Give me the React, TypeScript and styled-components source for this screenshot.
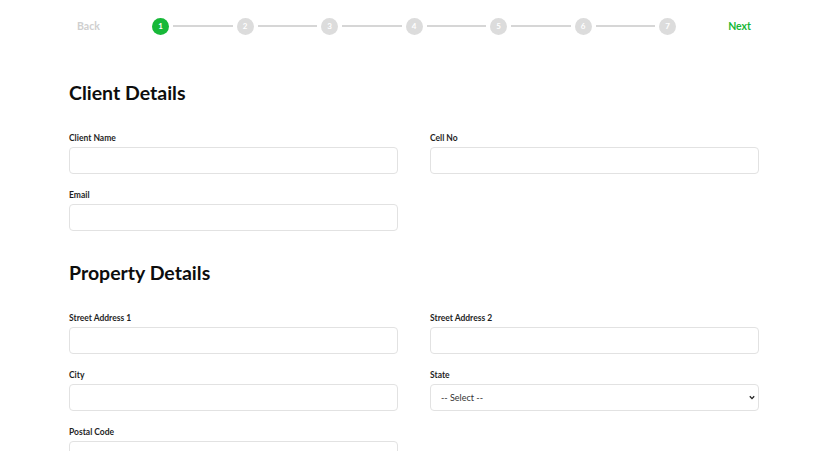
import { createGlobalStyle, styled } from "styled-components"

const GlobalStyle = createGlobalStyle`
    * {
        box-sizing: border-box;
    }

    body {
        margin: 0;
        background: #ffffff;
        font-family: 'Lato', 'Liberation Sans', sans-serif;
        color: #111111;
    }
`

const Page = styled.div`
    width: 690px;
    margin: 0 auto;
`

const TopBar = styled.div`
    height: 52px;
    display: flex;
    align-items: center;
    justify-content: space-between;
`

const NavButton = styled.button<{ $active?: boolean }>`
    border: 0 none;
    background: transparent;
    padding: 0 8px;
    font-family: inherit;
    font-size: 10.5px;
    font-weight: 700;
    color: ${p => p.$active ? "#17b838" : "#cfcfcf"};
    cursor: pointer;
`

const Steps = styled.div`
    width: 524px;
    display: flex;
    align-items: center;
`

const StepDot = styled.div<{ $active?: boolean }>`
    width: 17px;
    height: 17px;
    flex: none;
    border-radius: 50%;
    display: flex;
    align-items: center;
    justify-content: center;
    font-size: 8px;
    font-weight: 700;
    color: #ffffff;
    background-color: ${p => p.$active ? "#17b838" : "#dcdcdc"};
`

const Connector = styled.div`
    flex: 1;
    height: 2px;
    margin: 0 4px;
    background-color: #d6d6d6;
`

const Section = styled.section`
    margin-top: 29px;

    & + & {
        margin-top: 30px;
    }

    h2 {
        margin: 0 0 27px;
        font-size: 19.5px;
        line-height: 24px;
        font-weight: 700;
        color: #0d0d0d;
    }
`

const Grid = styled.div`
    display: grid;
    grid-template-columns: 1fr 1fr;
    column-gap: 32px;
    row-gap: 15px;
`

const Field = styled.div`
    position: relative;
    display: flex;
    flex-direction: column;

    label {
        display: block;
        font-size: 8.5px;
        line-height: 10px;
        font-weight: 700;
        color: #1f1f1f;
        padding-top: 1px;
        margin-bottom: 4px;
    }
`

const TextInput = styled.input`
    height: 27px;
    width: 100%;
    border: 1px solid #e2e2e2;
    border-radius: 4px;
    padding: 0 10px;
    font-family: inherit;
    font-size: 9px;
    outline: none;
`

const Select = styled.select`
    height: 27px;
    width: 100%;
    border: 1px solid #e2e2e2;
    border-radius: 4px;
    padding: 0 10px;
    font-family: inherit;
    font-size: 9px;
    color: #333333;
    background-color: #ffffff;
    appearance: none;
    outline: none;
`

const Chevron = styled.svg`
    position: absolute;
    right: 4px;
    bottom: 11px;
    width: 6px;
    height: 5px;
    pointer-events: none;
`

const steps = [1, 2, 3, 4, 5, 6, 7]

export default () => <>
    <GlobalStyle />
    <Page>
        <TopBar>
            <NavButton>Back</NavButton>
            <Steps>
                {steps.map(n => <>
                    {n > 1 && <Connector key={"c" + n} />}
                    <StepDot key={n} $active={n === 1}>{n}</StepDot>
                </>)}
            </Steps>
            <NavButton $active>Next</NavButton>
        </TopBar>

        <Section>
            <h2>Client Details</h2>
            <Grid>
                <Field>
                    <label>Client Name</label>
                    <TextInput name="clientName" />
                </Field>
                <Field>
                    <label>Cell No</label>
                    <TextInput name="cellNo" />
                </Field>
                <Field>
                    <label>Email</label>
                    <TextInput name="email" />
                </Field>
            </Grid>
        </Section>

        <Section>
            <h2>Property Details</h2>
            <Grid>
                <Field>
                    <label>Street Address 1</label>
                    <TextInput name="street1" />
                </Field>
                <Field>
                    <label>Street Address 2</label>
                    <TextInput name="street2" />
                </Field>
                <Field>
                    <label>City</label>
                    <TextInput name="city" />
                </Field>
                <Field>
                    <label>State</label>
                    <Select name="state">
                        <option>-- Select --</option>
                    </Select>
                    <Chevron viewBox="0 0 6 5">
                        <path d="M0.8 1.2 L3 3.6 L5.2 1.2" fill="none" stroke="#222222" strokeWidth="1.3" />
                    </Chevron>
                </Field>
                <Field>
                    <label>Postal Code</label>
                    <TextInput name="postalCode" />
                </Field>
            </Grid>
        </Section>
    </Page>
</>
